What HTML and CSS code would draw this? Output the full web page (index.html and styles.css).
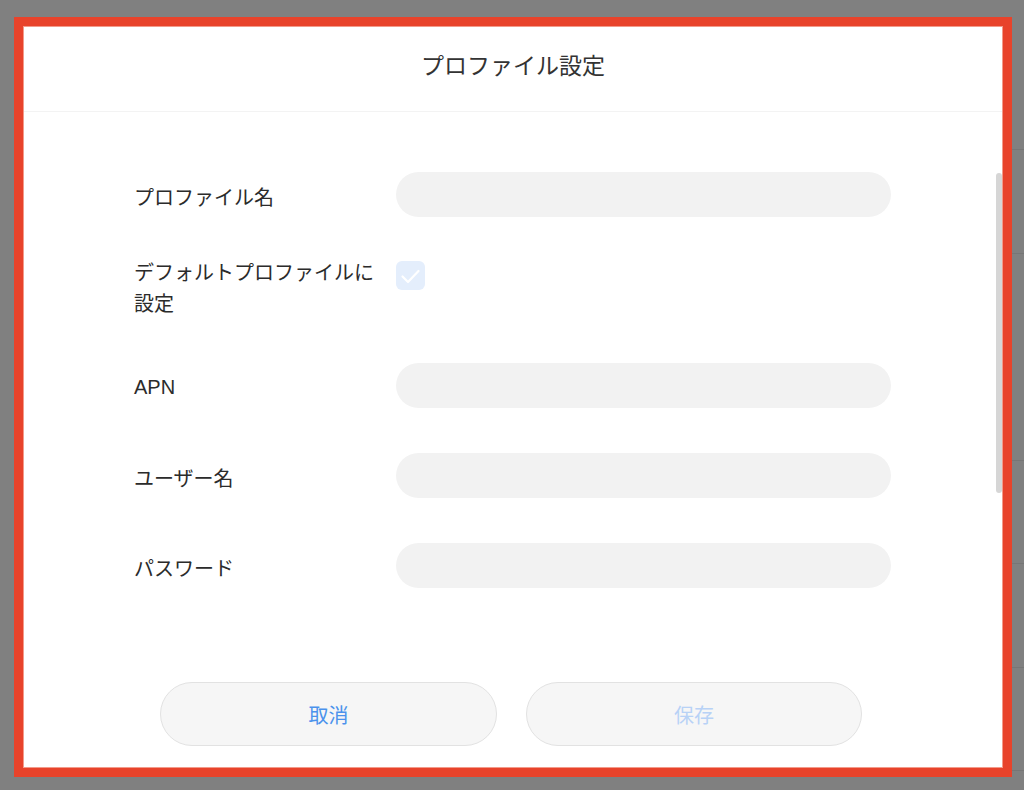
FILE: index.html
```html
<!DOCTYPE html>
<html lang="ja">
<head>
  <meta charset="UTF-8" />
  <meta name="viewport" content="width=device-width, initial-scale=1.0"/>
  <title>プロファイル設定</title>
  <link rel="stylesheet" href="styles.css">
</head>
<body>
  <div class="frame">
    <div class="modal">
      <div class="modal-header">プロファイル設定</div>

      <div class="modal-body">
        <!-- form rows -->
        <div class="form">
          <div class="row">
            <label class="label">プロファイル名</label>
            <input class="field" type="text">
          </div>
          <div class="row row-check">
            <label class="label">デフォルトプロファイルに設定</label>
            <span class="checkbox">
              <svg width="29" height="29" viewBox="0 0 29 29">
                <path d="M6.5 15.5 L12 21 L22.5 10" fill="none" stroke="#fff" stroke-width="2.2" stroke-linecap="round" stroke-linejoin="round"/>
              </svg>
            </span>
          </div>
          <div class="row">
            <label class="label label-latin">APN</label>
            <input class="field" type="text">
          </div>
          <div class="row">
            <label class="label">ユーザー名</label>
            <input class="field" type="text">
          </div>
          <div class="row">
            <label class="label">パスワード</label>
            <input class="field" type="password">
          </div>
        </div>

        <div class="buttons">
          <button class="btn btn-cancel">取消</button>
          <button class="btn btn-save" disabled>保存</button>
        </div>
      </div>

      <div class="scroll-thumb"></div>
    </div>
  </div>
</body>
</html>
```

FILE: styles.css
```css
body {
  margin: 0;
  padding: 0;
  background-color: #808080;
  background-image: repeating-linear-gradient(to bottom, transparent 0, transparent 102.5px, #767676 102.5px, #767676 103.5px);
  background-size: 12px 800px;
  background-position: right 47px;
  background-repeat: no-repeat;
  font-family: "Noto Sans CJK JP", "Noto Sans", sans-serif;
  overflow: hidden;
}

.frame {
  margin: 17px 12px 0 14px;
  height: 742px;
  border: 9px solid #e8432b;
}

.modal {
  position: relative;
  height: 740px;
  border: 1px solid #f39a8a;
  background: #ffffff;
  overflow: hidden;
}

.modal-header {
  height: 84px;
  line-height: 74px;
  text-align: center;
  font-size: 23px;
  color: #333;
  border-bottom: 1px solid #f3f3f3;
}

.modal-body {
  padding: 60px 0 0 110px;
}

.form {
  display: flex;
  flex-direction: column;
  gap: 45px;
}

.row {
  display: flex;
  align-items: center;
}

.row-check {
  align-items: flex-start;
  margin-top: -6px;
}

.label {
  width: 250px;
  margin-right: 12px;
  padding-top: 4px;
  font-size: 20px;
  line-height: 31px;
  color: #2b2b2b;
}

.row-check .label {
  padding-top: 0;
}

.label-latin {
  font-family: "Liberation Sans", Arial, sans-serif;
}

.field {
  width: 495px;
  height: 45px;
  box-sizing: border-box;
  border: none;
  border-radius: 23px;
  background: #f2f2f2;
  outline: none;
  padding: 0 20px;
}

.checkbox {
  display: block;
  width: 29px;
  height: 29px;
  margin-top: 5px;
  border-radius: 6px;
  background: #e4eefc;
}

.checkbox svg {
  display: block;
}

.buttons {
  display: grid;
  grid-template-columns: 337px 336px;
  gap: 29px;
  margin: 94px 0 0 26px;
}

.btn {
  height: 64px;
  border: 1px solid #e2e2e2;
  border-radius: 32px;
  background: #f6f6f6;
  font-family: "Noto Sans CJK JP", sans-serif;
  font-size: 20px;
  color: #4b92ec;
  padding: 0;
}

.btn-save {
  color: #b8d2f6;
}

.scroll-thumb {
  position: absolute;
  right: 0;
  top: 146px;
  width: 6px;
  height: 320px;
  border-radius: 3px;
  background: #d6d6d6;
}
```
